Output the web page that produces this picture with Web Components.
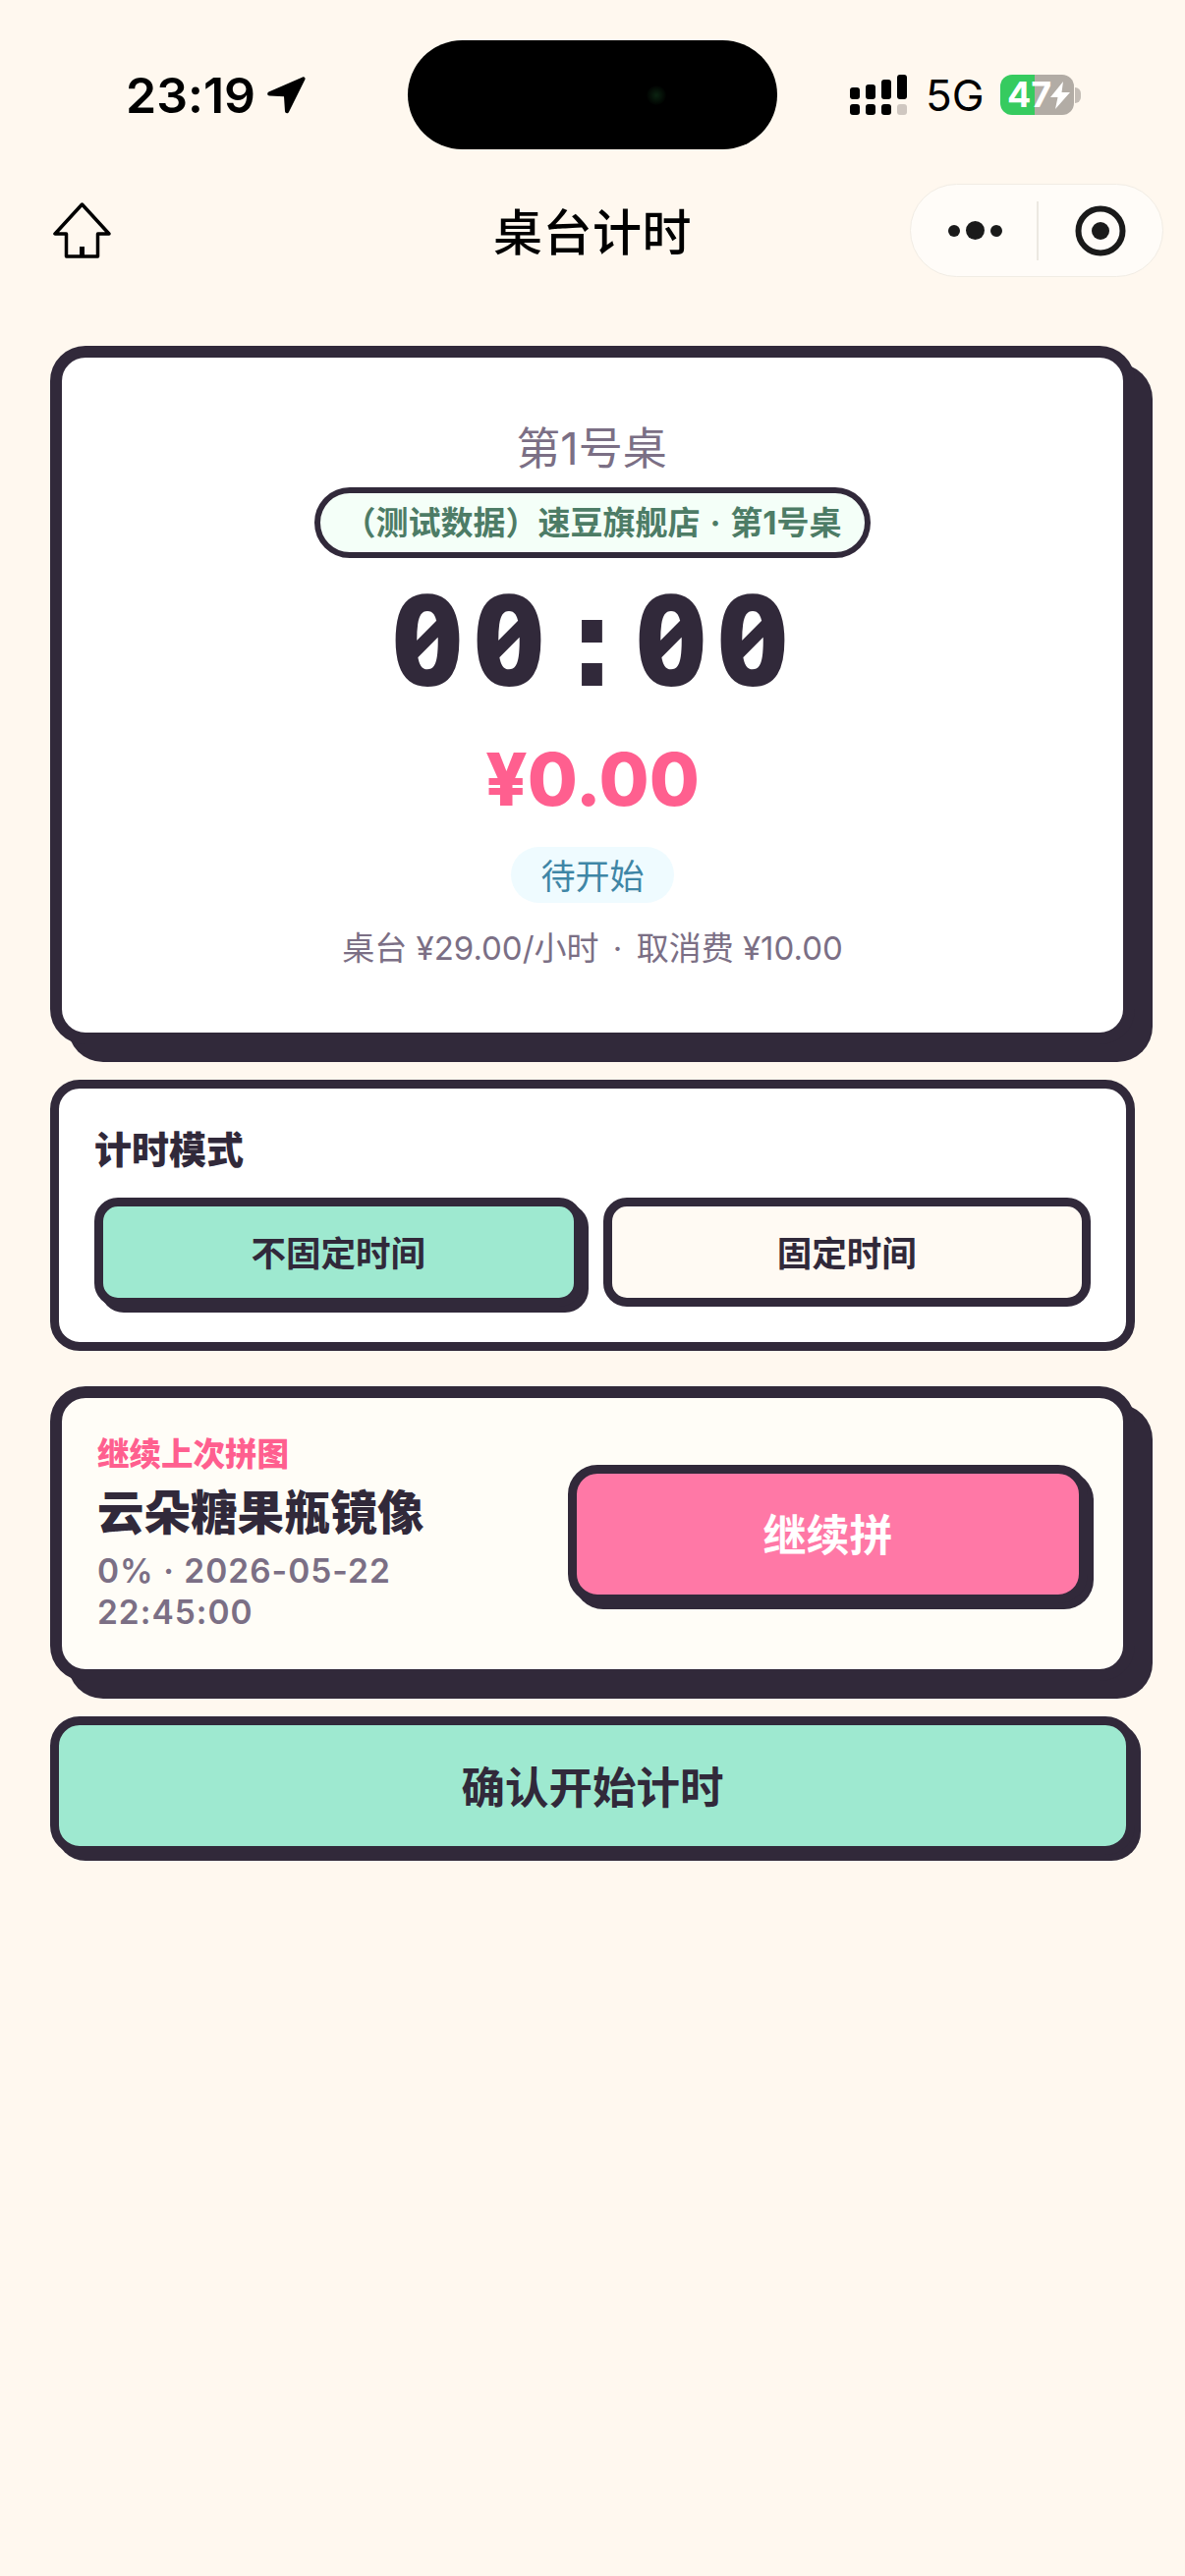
<!DOCTYPE html>
<html lang="zh-CN">
<head>
<meta charset="utf-8">
<title>桌台计时</title>
<style>
  html, body {
    margin: 0;
    padding: 0;
  }
  body {
    --ink: #31293a;
    --muted: #7b6f85;
    --mint: #9ee9d0;
    --pink: #ff78a6;
    --rose: #ff5f8f;
    background-color: #fff8ef;
    color: var(--ink);
    font-family: Inter, "Noto Sans CJK SC", sans-serif;
    min-height: 2622px;
  }
  .content {
    display: flex;
    flex-direction: column;
    gap: 36px;
    padding: 70px 51px 0;
  }
</style>
</head>
<body>
  <status-bar></status-bar>
  <nav-bar>桌台计时</nav-bar>
  <div class="content">
    <timer-card></timer-card>
    <mode-card></mode-card>
    <resume-card></resume-card>
    <chunky-button size="large">确认开始计时</chunky-button>
  </div>

<script>
class StatusBar extends HTMLElement {
  constructor() {
    super();
    this.shadow = this.attachShadow({ mode: 'open' });
  }

  connectedCallback() {
    this.render();
  }

  render() {
    this.shadow.innerHTML = /* html */
    `
    <style>
      :host {
        display: block;
        height: 187px;
        box-sizing: border-box;
        padding-top: 41px;
        color: #000;
      }
      .bar {
        display: flex;
        height: 111px;
        align-items: center;
      }
      .left {
        display: flex;
        align-items: center;
        padding-left: 128px;
        box-sizing: border-box;
        gap: 11px;
        flex: none;
        width: 415px;
      }
      .time {
        font-size: 50px;
        font-weight: 600;
        font-feature-settings: 'calt' 0;
        line-height: 60px;
      }
      .island {
        flex: none;
        display: flex;
        align-items: center;
        justify-content: flex-end;
        width: 376px;
        height: 111px;
        padding-right: 113px;
        box-sizing: border-box;
        border-radius: 56px;
        background-color: #000;
      }
      .lens {
        width: 20px;
        height: 20px;
        border-radius: 50%;
        background: radial-gradient(circle, #0b2411 0%, #000 75%);
      }
      .right {
        display: flex;
        align-items: center;
        padding-left: 74px;
      }
      .net {
        font-size: 44px;
        line-height: 50px;
        font-weight: 400;
        margin-left: 19px;
        width: 56px;
      }
      .battery {
        position: relative;
        display: flex;
        align-items: center;
        width: 75px;
        height: 41px;
        margin-left: 20px;
        border-radius: 12px;
        background: linear-gradient(90deg, #36cb5f 0, #36cb5f 35px, #b2aca5 35px);
        color: #fff;
        font-size: 36px;
        font-weight: 700;
        line-height: 41px;
        padding-left: 7px;
        box-sizing: border-box;
      }
      .battery svg {
        position: absolute;
        left: 51px;
        top: 7px;
      }
      .nub {
        width: 6px;
        height: 16px;
        border-radius: 0 8px 8px 0;
        background-color: #c4bdb6;
        margin-left: 1px;
      }
    </style>
    <div class="bar">
      <div class="left">
        <span class="time">23:19</span>
        <svg width="40" height="39" viewBox="0 0 40 39">
          <path d="M37 1.5 2.5 16.6c-2 .9-1.6 3.9.7 4l14.8.7 1 15c.2 2.300 3.200 2.700 4 .6L39.500 3.800C40 2.200 38.500.9 37 1.500Z" fill="#000"/>
        </svg>
      </div>
      <div class="island"><div class="lens"></div></div>
      <div class="right">
        <svg width="58" height="41" viewBox="0 0 58 41" fill="#000">
          <rect x="0" y="13" width="10" height="12" rx="3"/>
          <rect x="16" y="10" width="10" height="15" rx="3"/>
          <rect x="32" y="5" width="10" height="20" rx="3"/>
          <rect x="48" y="0" width="10" height="25" rx="3"/>
          <rect x="0" y="30" width="10" height="11" rx="3"/>
          <rect x="16" y="30" width="10" height="11" rx="3"/>
          <rect x="32" y="30" width="10" height="11" rx="3"/>
          <rect x="48" y="30" width="10" height="11" rx="3" fill="#cfc7c0"/>
        </svg>
        <span class="net">5G</span>
        <div class="battery">
          47
          <svg width="20" height="28" viewBox="0 0 20 28"><path d="M13 0 0 16h7.500L5 28 20 11h-8.500L13 0Z" fill="#fff"/></svg>
        </div>
        <div class="nub"></div>
      </div>
    </div>
    `;
  }
}

class NavBar extends HTMLElement {
  constructor() {
    super();
    this.shadow = this.attachShadow({ mode: 'open' });
  }

  connectedCallback() {
    this.render();
  }

  render() {
    this.shadow.innerHTML = /* html */
    `
    <style>
      :host {
        display: grid;
        grid-template-columns: 1fr auto 1fr;
        align-items: center;
        height: 95px;
        padding: 0 22px;
        color: #000;
      }
      .title {
        font-size: 50px;
        font-weight: 500;
        line-height: 60px;
        letter-spacing: 0.5px;
        padding-top: 4px;
      }
      .home {
        display: block;
        margin-left: 32px;
      }
      .capsule {
        justify-self: end;
        display: flex;
        align-items: center;
        width: 258px;
        height: 95px;
        box-sizing: border-box;
        border: 1px solid #f1ece4;
        border-radius: 48px;
        background-color: #fffcf8;
      }
      .more {
        display: flex;
        align-items: center;
        justify-content: center;
        gap: 6px;
        width: 130px;
        height: 60px;
        padding-left: 2px;
        box-sizing: border-box;
        border-right: 2px solid #ece8e2;
      }
      .more i {
        display: block;
        width: 12px;
        height: 12px;
        border-radius: 50%;
        background-color: #1a1a1a;
      }
      .more i.big {
        width: 19px;
        height: 19px;
      }
      .scan {
        flex: 1;
        display: flex;
        justify-content: center;
      }
    </style>
    <svg class="home" width="59" height="57" viewBox="0 0 59 57" fill="none" stroke="#000" stroke-width="3.500" stroke-linejoin="round">
      <path d="M29.500 2 2 32h11.500v23h32V32H57L29.500 2Z"/>
      <path d="M29.500 45v10" stroke-width="5" stroke-linejoin="miter"/>
    </svg>
    <div class="title"><slot></slot></div>
    <div class="capsule">
      <div class="more"><i></i><i class="big"></i><i></i></div>
      <div class="scan">
        <svg width="52" height="52" viewBox="0 0 52 52">
          <circle cx="26" cy="26" r="22.500" fill="none" stroke="#1a1a1a" stroke-width="6"/>
          <circle cx="26" cy="26" r="9" fill="#1a1a1a"/>
        </svg>
      </div>
    </div>
    `;
  }
}

class TimerCard extends HTMLElement {
  constructor() {
    super();
    this.shadow = this.attachShadow({ mode: 'open' });
  }

  connectedCallback() {
    this.render();
  }

  render() {
    this.shadow.innerHTML = /* html */
    `
    <style>
      :host {
        display: flex;
        flex-direction: column;
        align-items: center;
        box-sizing: border-box;
        height: 711px;
        padding-top: 63px;
        border: 12px solid var(--ink);
        border-radius: 36px;
        background-color: #fff;
        box-shadow: 18px 18px 0 var(--ink);
        text-align: center;
      }
      .name {
        height: 60px;
        margin-bottom: 9px;
        padding-right: 2px;
        color: var(--muted);
        font-size: 45px;
        line-height: 60px;
      }
      .shop {
        box-sizing: border-box;
        height: 72px;
        padding: 0 24px;
        border: 6px solid var(--ink);
        border-radius: 36px;
        background-color: #f4fff8;
        color: #4d7c66;
        font-size: 33px;
        font-weight: 700;
        line-height: 60px;
        white-space: nowrap;
      }
      .shop i {
        font-style: normal;
        margin: 0 2px;
      }
      .time {
        height: 144px;
        margin-top: 9px;
        padding-left: 4px;
        font-family: "Noto Sans", monospace;
        font-feature-settings: 'zero', 'tnum';
        font-size: 128px;
        font-weight: 800;
        letter-spacing: 9px;
        line-height: 144px;
        white-space: nowrap;
      }
      .time span {
        font-family: "DejaVu Sans Mono", monospace;
        font-weight: 700;
        letter-spacing: 5px;
      }
      .price {
        height: 100px;
        margin-top: 22px;
        color: var(--rose);
        font-size: 74px;
        font-weight: 800;
        line-height: 100px;
      }
      .state {
        box-sizing: border-box;
        height: 57px;
        margin-top: 19px;
        padding: 0 30px;
        border-radius: 29px;
        background-color: #effbff;
        color: #3f86a6;
        font-size: 35px;
        line-height: 60px;
      }
      .rate {
        height: 48px;
        margin-top: 22px;
        color: var(--muted);
        font-size: 33px;
        line-height: 48px;
        white-space: nowrap;
      }
      .rate i {
        font-style: normal;
        margin: 0 5px;
      }
    </style>
    <div class="name">第1号桌</div>
    <div class="shop">（测试数据）速豆旗舰店 <i>·</i> 第1号桌</div>
    <div class="time">00<span>:</span>00</div>
    <div class="price">¥0.00</div>
    <div class="state">待开始</div>
    <div class="rate">桌台 ¥29.00/小时 <i>·</i> 取消费 ¥10.00</div>
    `;
  }
}

class ChunkyButton extends HTMLElement {
  constructor() {
    super();
    this.shadow = this.attachShadow({ mode: 'open' });
  }

  connectedCallback() {
    this.render();
  }

  render() {
    this.shadow.innerHTML = /* html */
    `
    <style>
      :host {
        display: flex;
        align-items: center;
        justify-content: center;
        box-sizing: border-box;
        height: 111px;
        padding-bottom: 3px;
        border: 9px solid var(--ink);
        border-radius: 24px;
        background-color: #fffaf3;
        font-size: 35.500px;
        font-weight: 700;
        color: var(--ink);
      }
      :host([active]) {
        background-color: var(--mint);
        box-shadow: 6px 6px 0 var(--ink);
      }
      :host([size="large"]) {
        height: 141px;
        background-color: var(--mint);
        box-shadow: 6px 6px 0 var(--ink);
        border-radius: 30px;
        font-size: 44.500px;
        font-weight: 600;
      }
      :host([tone="pink"]) {
        background-color: var(--pink);
        color: #fff;
      }
    </style>
    <slot></slot>
    `;
  }
}

class ModeCard extends HTMLElement {
  constructor() {
    super();
    this.shadow = this.attachShadow({ mode: 'open' });
  }

  connectedCallback() {
    this.render();
  }

  render() {
    this.shadow.innerHTML = /* html */
    `
    <style>
      :host {
        display: block;
        box-sizing: border-box;
        height: 276px;
        padding: 36px;
        border: 9px solid var(--ink);
        border-radius: 30px;
        background-color: #fff;
      }
      .title {
        height: 54px;
        margin-bottom: 21px;
        font-size: 38px;
        font-weight: 800;
        line-height: 52px;
      }
      .row {
        display: grid;
        grid-template-columns: 1fr 1fr;
        gap: 21px;
      }
    </style>
    <div class="title">计时模式</div>
    <div class="row">
      <chunky-button active>不固定时间</chunky-button>
      <chunky-button>固定时间</chunky-button>
    </div>
    `;
  }
}

class ResumeCard extends HTMLElement {
  constructor() {
    super();
    this.shadow = this.attachShadow({ mode: 'open' });
  }

  connectedCallback() {
    this.render();
  }

  render() {
    this.shadow.innerHTML = /* html */
    `
    <style>
      :host {
        display: flex;
        align-items: center;
        justify-content: space-between;
        box-sizing: border-box;
        height: 300px;
        padding: 0 36px;
        border: 12px solid var(--ink);
        border-radius: 36px;
        background-color: #fffdf7;
        box-shadow: 18px 18px 0 var(--ink);
      }
      .info {
        width: 400px;
      }
      .label {
        margin-bottom: 2px;
        color: var(--rose);
        font-size: 32.500px;
        font-weight: 800;
        line-height: 42px;
      }
      .title {
        font-size: 47.500px;
        font-weight: 800;
        line-height: 72px;
        margin-bottom: 2px;
        white-space: nowrap;
      }
      .meta {
        color: var(--muted);
        font-size: 33.500px;
        font-weight: 600;
        letter-spacing: 1px;
        line-height: 42px;
      }
      chunky-button {
        width: 529px;
        height: 141px;
        flex: none;
        border-radius: 30px;
        font-size: 44px;
      }
    </style>
    <div class="info">
      <div class="label">继续上次拼图</div>
      <div class="title">云朵糖果瓶镜像</div>
      <div class="meta">0% · 2026-05-22 22:45:00</div>
    </div>
    <chunky-button active tone="pink">继续拼</chunky-button>
    `;
  }
}

customElements.define('status-bar', StatusBar);
customElements.define('nav-bar', NavBar);
customElements.define('chunky-button', ChunkyButton);
customElements.define('timer-card', TimerCard);
customElements.define('mode-card', ModeCard);
customElements.define('resume-card', ResumeCard);
</script>
</body>
</html>
